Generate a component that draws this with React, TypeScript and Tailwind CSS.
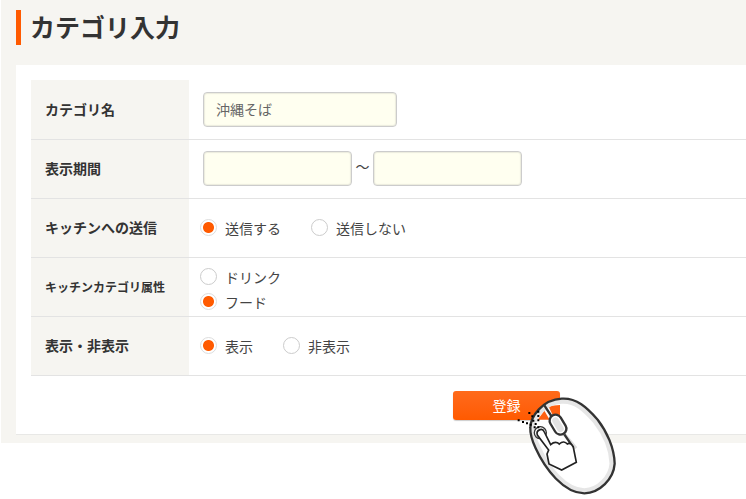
import type { ReactNode } from "react";

function Row({ label, htmlFor, small, children }: {
  label: string;
  htmlFor?: string;
  small?: boolean;
  children: ReactNode;
}) {
  return (
    <tr className="h-[59px] border-b border-[#e3e3e3]">
      <th
        scope="row"
        className={`w-[158px] bg-[#f6f5f1] pl-3.5 text-left font-bold text-[#333] ${small ? "text-[12px]" : "text-[14px]"}`}
      >
        {htmlFor ? <label htmlFor={htmlFor}>{label}</label> : label}
      </th>
      <td className="pl-3.5">{children}</td>
    </tr>
  );
}

function Radio({ name, label, checked }: { name: string; label: string; checked?: boolean }) {
  return (
    <label className="flex items-center gap-2">
      <input
        type="radio"
        name={name}
        defaultChecked={checked}
        className="size-[17px] appearance-none rounded-full border border-[#ccc] bg-white checked:border-[#ddd] checked:bg-[radial-gradient(circle,#ff5a00_5px,#fff_6px)]"
      />
      <span className="pt-0.5">{label}</span>
    </label>
  );
}

const field = "h-[35px] rounded border border-[#ccc] bg-[#fffff0] px-3 text-[14px] text-[#666] shadow-[inset_0_0_1px_1px_rgba(0,0,0,0.08)]";

function MouseClick() {
  return (
    <svg
      className="pointer-events-none absolute -top-1.5 left-[52px]"
      width="120"
      height="114"
      viewBox="0 0 360 342"
      fill="none"
      aria-hidden="true"
    >
      <path
        d="M76 128C77 95 112 44 170 41C215 38 246 68 278 104C306 140 328 190 329 236C326 282 284 324 238 325C176 324 120 252 92 190C80 164 75 145 76 128Z"
        fill="#fff"
      />
      <path d="M98 104L118 77L134 104Z" fill="#ff6010" />
      <path d="M130 63L165 60V105H150Z" fill="#ff6010" />
      <path
        d="M84 128C85 99 117 53 170 50C211 47 240 75 270 110C298 146 319 192 320 236C317 276 281 315 238 316C181 315 128 249 101 188C88 163 83 145 84 128Z"
        stroke="#e6e6e6"
        strokeWidth="13"
      />
      <path d="M178 148L213 190" stroke="#ddd" strokeWidth="10" />
      <path
        d="M76 128C77 95 112 44 170 41C215 38 246 68 278 104C306 140 328 190 329 236C326 282 284 324 238 325C176 324 120 252 92 190C80 164 75 145 76 128Z"
        stroke="#333"
        strokeWidth="7"
      />
      <path d="M118 61L141 96M178 148L205 188" stroke="#333" strokeWidth="7" />
      <rect x="-18" y="-32" width="36" height="64" rx="18" transform="translate(159 119) rotate(-31)" fill="#fff" stroke="#333" strokeWidth="7" />
      <rect x="-10" y="-24" width="20" height="48" rx="10" transform="translate(159 119) rotate(-31)" fill="#e2e2e2" />
      <circle cx="106" cy="143" r="18" fill="#fff" stroke="#333" strokeWidth="4" />
      <path
        d="M97 150C92 135 112 127 118 141L137 179C146 171 156 171 163 177C172 168 181 170 187 177C195 172 202 180 205 187L214 232L170 255L132 237L126 207L131 195Z"
        fill="#fff"
        stroke="#222"
        strokeWidth="5"
      />
      <path
        d="M38 103h6v6h-6zM51 108h6v6h-6zM63 112h6v6h-6zM74 116h6v6h-6zM86 124h6v6h-6zM97 124h6v6h-6zM70 81h6v6h-6zM79 91h6v6h-6zM82 104h6v6h-6zM97 77h6v6h-6zM97 90h6v6h-6zM97 103h6v6h-6zM89 114h6v6h-6z"
        fill="#000"
      />
    </svg>
  );
}

export default function App() {
  return (
    <div className="min-h-screen overflow-hidden bg-white pl-px font-['Noto_Sans_CJK_JP',sans-serif] text-[14px] text-[#444]">
      <main className="bg-[#f6f5f1] pt-2.5 pb-2 pl-[15px]">
        <h1 className="h-[35px] border-l-5 border-[#ff5a00] pl-[9px] text-[25px] leading-[32px] font-bold text-[#333]">
          カテゴリ入力
        </h1>
        <form className="mt-5 border-b border-[#e8e8e6] bg-white pt-[15px] pb-3.5 pl-[15px]">
          <table className="w-full border-collapse">
            <tbody>
              <Row label="カテゴリ名" htmlFor="name">
                <input id="name" type="text" defaultValue="沖縄そば" className={`${field} w-[194px]`} />
              </Row>
              <Row label="表示期間">
                <div className="flex items-center">
                  <input type="text" aria-label="開始日" className={`${field} w-[149px]`} />
                  <span className="w-[21px] pb-1 text-center">～</span>
                  <input type="text" aria-label="終了日" className={`${field} w-[149px]`} />
                </div>
              </Row>
              <Row label="キッチンへの送信">
                <div className="-ml-[3px] flex gap-[30px]">
                  <Radio name="send" label="送信する" checked />
                  <Radio name="send" label="送信しない" />
                </div>
              </Row>
              <Row label="キッチンカテゴリ属性" small>
                <div className="-ml-[3px] flex flex-col gap-0.5 pt-1">
                  <Radio name="attr" label="ドリンク" />
                  <Radio name="attr" label="フード" checked />
                </div>
              </Row>
              <Row label="表示・非表示">
                <div className="-ml-[3px] flex gap-[30px]">
                  <Radio name="visible" label="表示" checked />
                  <Radio name="visible" label="非表示" />
                </div>
              </Row>
            </tbody>
          </table>
          <div className="mt-[15px] pl-[422px]">
            <div className="relative w-fit">
              <button
                type="button"
                className="block h-[29px] w-[107px] rounded-[3px] bg-linear-to-b from-[#ff6a1a] to-[#ff5a00] text-[14px] text-white shadow-[0_1px_1px_rgba(0,0,0,0.2)]"
              >
                登録
              </button>
              <MouseClick />
            </div>
          </div>
        </form>
      </main>
    </div>
  );
}
